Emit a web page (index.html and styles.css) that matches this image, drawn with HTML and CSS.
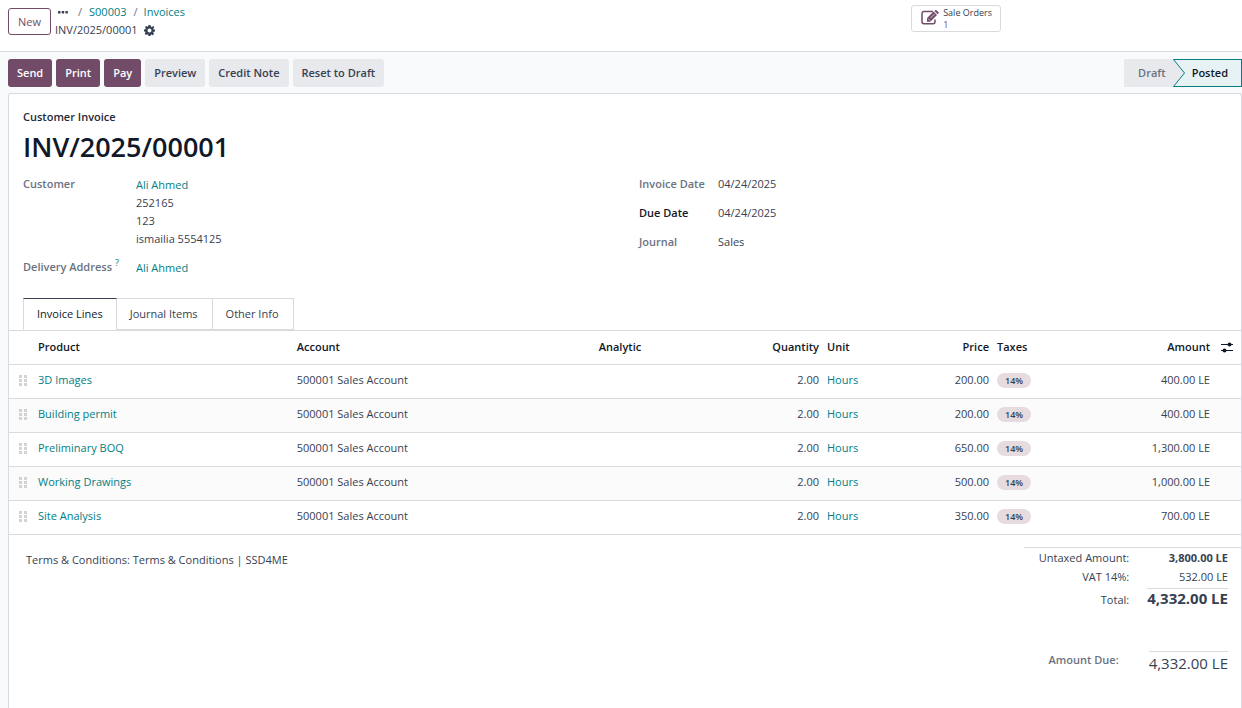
FILE: index.html
```html
<!DOCTYPE html>
<html lang="en">
<head>
<meta charset="utf-8">
<title>INV/2025/00001</title>
<link rel="stylesheet" href="styles.css">
</head>
<body>
<svg class="defs" aria-hidden="true">
  <symbol id="grip" viewBox="0 0 8 11"><path d="M0 0h3v3H0zM5 0h3v3H5zM0 4h3v3H0zM5 4h3v3H5zM0 8h3v3H0zM5 8h3v3H5z"/></symbol>
</svg>
<header class="topbar">
  <div class="topbar-left">
    <button class="btn btn-outline" type="button">New</button>
    <nav class="crumbs" aria-label="Breadcrumb">
      <div class="crumb-line">
        <button class="crumb-more" type="button" aria-label="More">
          <svg width="10" height="4" viewBox="0 0 10 4"><rect x="0" y="1" width="2.500" height="2.500" rx=".6"/><rect x="3.700" y="1" width="2.500" height="2.500" rx=".6"/><rect x="7.400" y="1" width="2.500" height="2.500" rx=".6"/></svg>
        </button>
        <span class="sep">/</span><a href="#">S00003</a><span class="sep">/</span><a href="#">Invoices</a>
      </div>
      <div class="crumb-current"><span>INV/2025/00001</span>
        <button class="crumb-more" type="button" aria-label="Actions">
          <svg width="11" height="11" viewBox="0 0 22 22"><path fill-rule="evenodd" d="M9 0h4l.7 3.200 1.900.8L18.400 2.200l2 2-.4 1.200-1.500 1.500.8 1.900L22 9v4l-2.700.7-.8 1.900 1.600 2.300-2.700 2.700-2.300-1.600-1.900.8L13 22H9l-.7-2.700-1.900-.8-2.300 1.600-2.700-2.700 1.600-2.300-.8-1.900L0 13V9l2.700-.7.8-1.900L1.900 4.100l2.200-2.200 2.300 1.600 1.900-.8zM11 7a4 4 0 1 0 0 8 4 4 0 0 0 0-8z"/></svg>
        </button>
      </div>
    </nav>
  </div>
  <button class="stat" type="button">
    <svg width="18" height="15" viewBox="0 0 18 15"><path class="stat-box" d="M12 1.500H3A2 2 0 0 0 1 3.500v8.300a2 2 0 0 0 2 2h9a2 2 0 0 0 2-2V9.500"/><path d="M6 11.800V8L12.500 1.500l3.500 3.500-6.700 6.800zM13.300 1l1-.8q.6-.4 1.200 0L17.500 2.200q.5.600 0 1.200l-.8.900z"/><path class="stat-nick" d="M7.200 8.700l1.900 1.900M9.500 8l4-4"/></svg>
    <span class="stat-text"><span>Sale Orders</span><span class="stat-value">1</span></span>
  </button>
</header>

<div class="actions">
  <div class="buttons">
    <button class="btn btn-primary" type="button">Send</button>
    <button class="btn btn-primary" type="button">Print</button>
    <button class="btn btn-primary" type="button">Pay</button>
    <button class="btn btn-light" type="button">Preview</button>
    <button class="btn btn-light" type="button">Credit Note</button>
    <button class="btn btn-light" type="button">Reset to Draft</button>
  </div>
  <div class="status">
    <button class="step" type="button">Draft</button>
    <button class="step step-current" type="button" aria-current="step">
      <svg class="arrow" width="13" height="28" viewBox="0 0 13 28"><path class="arrow-fill" d="M0 0L11.500 14 0 28z"/><path class="arrow-line" d="M.5.500L11.500 14 .5 27.500"/></svg>
      Posted</button>
  </div>
</div>

<main class="sheet">
  <div class="head">
    <div class="kind">Customer Invoice</div>
    <h1>INV/2025/00001</h1>
    <div class="groups">
      <dl class="group group-left">
        <dt>Customer</dt>
        <dd><a href="#">Ali Ahmed</a><br>252165<br>123<br>ismailia 5554125</dd>
        <dt>Delivery Address <sup>?</sup></dt>
        <dd><a href="#">Ali Ahmed</a></dd>
      </dl>
      <dl class="group group-right">
        <dt>Invoice Date</dt><dd>04/24/2025</dd>
        <dt class="strong">Due Date</dt><dd>04/24/2025</dd>
        <dt>Journal</dt><dd>Sales</dd>
      </dl>
    </div>
  </div>

  <div class="tabs" role="tablist">
    <button class="tab tab-active" type="button" role="tab" aria-selected="true">Invoice Lines</button>
    <button class="tab" type="button" role="tab" aria-selected="false">Journal Items</button>
    <button class="tab" type="button" role="tab" aria-selected="false">Other Info</button>
  </div>

  <table class="lines">
    <colgroup><col class="c-grip"><col class="c-product"><col class="c-account"><col class="c-analytic"><col class="c-qty"><col class="c-unit"><col class="c-price"><col class="c-taxes"><col class="c-amount"><col class="c-opt"></colgroup>
    <thead>
      <tr><th></th><th>Product</th><th>Account</th><th>Analytic</th><th class="num">Quantity</th><th>Unit</th><th class="num">Price</th><th>Taxes</th><th class="num">Amount</th>
        <th class="opt"><button class="opt-btn" type="button" aria-label="Columns"><svg width="12" height="11" viewBox="0 0 12 11"><path class="opt-line" d="M0 2.500h12M0 8.500h12"/><circle cx="8.500" cy="2.500" r="2"/><circle cx="3.500" cy="8.500" r="2"/></svg></button></th></tr>
    </thead>
    <tbody>
      <tr><td class="grip"><svg><use href="#grip"/></svg></td><td><a href="#">3D Images</a></td><td>500001 Sales Account</td><td></td><td class="num">2.00</td><td><a href="#">Hours</a></td><td class="num">200.00</td><td><span class="tag">14%</span></td><td class="num">400.00 LE</td><td></td></tr>
      <tr><td class="grip"><svg><use href="#grip"/></svg></td><td><a href="#">Building permit</a></td><td>500001 Sales Account</td><td></td><td class="num">2.00</td><td><a href="#">Hours</a></td><td class="num">200.00</td><td><span class="tag">14%</span></td><td class="num">400.00 LE</td><td></td></tr>
      <tr><td class="grip"><svg><use href="#grip"/></svg></td><td><a href="#">Preliminary BOQ</a></td><td>500001 Sales Account</td><td></td><td class="num">2.00</td><td><a href="#">Hours</a></td><td class="num">650.00</td><td><span class="tag">14%</span></td><td class="num">1,300.00 LE</td><td></td></tr>
      <tr><td class="grip"><svg><use href="#grip"/></svg></td><td><a href="#">Working Drawings</a></td><td>500001 Sales Account</td><td></td><td class="num">2.00</td><td><a href="#">Hours</a></td><td class="num">500.00</td><td><span class="tag">14%</span></td><td class="num">1,000.00 LE</td><td></td></tr>
      <tr><td class="grip"><svg><use href="#grip"/></svg></td><td><a href="#">Site Analysis</a></td><td>500001 Sales Account</td><td></td><td class="num">2.00</td><td><a href="#">Hours</a></td><td class="num">350.00</td><td><span class="tag">14%</span></td><td class="num">700.00 LE</td><td></td></tr>
    </tbody>
  </table>

  <div class="foot">
    <p class="terms">Terms &amp; Conditions: Terms &amp; Conditions | SSD4ME</p>
    <div class="totals">
      <dl class="sums">
        <dt>Untaxed Amount:</dt><dd class="bold">3,800.00 LE</dd>
        <dt>VAT 14%:</dt><dd>532.00 LE</dd>
        <dt class="total">Total:</dt><dd class="total-value">4,332.00 LE</dd>
      </dl>
      <dl class="due">
        <dt>Amount Due:</dt><dd>4,332.00 LE</dd>
      </dl>
    </div>
  </div>
</main>
</body>
</html>
```

FILE: styles.css
```css
* { box-sizing: border-box; }
body {
  margin: 0;
  min-height: 100vh;
  display: flex;
  flex-direction: column;
  background: #f9fafb;
  color: #374151;
  font: 11px/18px "Open Sans", "Noto Sans", sans-serif;
}
button { font: inherit; color: inherit; border: 0; background: none; padding: 0; cursor: pointer; }
a { color: #017e84; text-decoration: none; }
dl, dd, p, h1 { margin: 0; }
svg { display: block; fill: currentColor; }
.defs { position: absolute; width: 0; height: 0; }

.topbar {
  display: grid;
  grid-template-columns: 1fr auto 241px;
  align-items: start;
  padding: 4px 0 11px 8px;
  background: #fff;
  border-bottom: 1px solid #d8dadd;
}
.topbar-left { display: flex; gap: 4px; }
.btn { height: 28px; padding: 0 9px; border-radius: 3px; font-weight: 600; }
.btn-outline { height: 27px; margin-top: 4px; background: #fff; border: 1px solid #714b67; color: #714b67; font-weight: 500; }
.btn-primary { background: #714b67; color: #fff; }
.btn-light { background: #e7e9ed; }
.crumb-line { display: flex; align-items: center; padding-left: 3px; line-height: 16px; font-weight: 500; }
.crumb-more { color: #374151; }
.sep { padding: 0 7px 0 10px; color: #6b7280; font-weight: 400; }
.sep ~ .sep { padding: 0 6px 0 7px; }
.crumb-current { display: flex; align-items: center; gap: 6px; line-height: 20px; }
.stat { display: flex; align-items: center; gap: 4px; height: 27px; margin-top: 1px; padding: 0 8px 0 9px; background: #fff; border: 1px solid #d8dadd; border-radius: 3px; font-size: 9px; font-weight: 500; line-height: 12px; text-align: left; }
.stat svg { color: #714b67; margin-bottom: 3px; }
.stat-box { fill: none; stroke: currentColor; stroke-width: 1.500; }
.stat-nick { fill: none; stroke: #fff; stroke-width: 0.700; }
.stat-text { display: flex; flex-direction: column; }
.stat-value { color: #714b67; }

.actions { display: flex; justify-content: space-between; padding: 7px 0 6px 8px; }
.buttons { display: flex; gap: 4px; }
.status { display: flex; }
.step { height: 28px; padding: 0 7px 0 14px; background: #e7e9ed; color: #6b7280; font-weight: 600; }
.step-current { position: relative; padding: 0 13px 0 19px; background: #e6f2f3; color: #111827; border: 1px solid #017e84; border-left: 0; }
.arrow { position: absolute; left: 0; top: -1px; }
.arrow-fill { fill: #e7e9ed; }
.arrow-line { fill: none; stroke: #017e84; }

.sheet { flex: 1; margin-left: 8px; background: #fff; border: 1px solid #d8dadd; border-bottom: 0; border-radius: 3px 3px 0 0; }
.head { padding: 15px 14px 21px; }
.kind { line-height: 16px; font-weight: 600; color: #1f2937; }
h1 { margin: 4px 0 10px; font-size: 27px; line-height: 36px; font-weight: 600; color: #111827; }
.groups { display: grid; grid-template-columns: 1fr 1fr; gap: 28px; }
.group { display: grid; align-content: start; }
.group-left { grid-template-columns: 113px 1fr; row-gap: 10px; }
.group-left dd { padding-top: 1px; }
.group-right { grid-template-columns: 79px 1fr; row-gap: 11px; }
dt { color: #6b7280; font-weight: 600; }
.strong { color: #111827; }
sup { color: #017e84; font-size: 9px; line-height: 9px; font-weight: 400; }

.tabs { display: flex; padding-left: 14px; border-bottom: 1px solid #d8dadd; }
.tab { height: 32px; padding: 0 14px 0 13px; border: 1px solid #d8dadd; border-left: 0; }
.tab-active { padding-right: 13px; border-left: 1px solid #d8dadd; border-top-color: #374151; border-bottom-color: #fff; color: #111827; }

.lines { width: 100%; table-layout: fixed; border-collapse: collapse; }
.c-grip { width: 25px; }
.c-product { width: 21%; }
.c-account { width: 302px; }
.c-qty { width: 100px; }
.c-unit { width: 77px; }
.c-price { width: 93px; }
.c-taxes { width: 108px; }
.c-amount { width: 113px; }
.c-opt { width: 27px; }
th, td { height: 34px; padding: 0 4px 2px; border-bottom: 1px solid #d8dadd; text-align: left; white-space: nowrap; }
th { height: 33px; padding-bottom: 0; color: #111827; font-weight: 600; }
.num { text-align: right; }
tbody tr:nth-child(even) { background: #fbfbfb; }
.grip { padding-left: 10px; color: #d1d3d7; }
.grip svg { width: 8px; height: 11px; }
.tag { display: inline-block; padding: 0 8px; border-radius: 8px; background: #e6dcdf; font-size: 9px; line-height: 15px; font-weight: 600; }
.opt { padding-left: 7px; }
.opt-btn { display: block; }
.opt-line { stroke: currentColor; }

.foot { display: flex; justify-content: space-between; align-items: flex-start; padding: 12px 0 24px 17px; }
.terms { padding-top: 4px; }
.totals { width: 217px; border-top: 1px solid #d8dadd; }
.sums, .due { display: grid; grid-template-columns: 1fr auto; column-gap: 18px; padding-right: 13px; text-align: right; }
.sums dt { color: #374151; font-weight: 400; }
.sums dt, .sums dd { line-height: 19px; }
.bold { font-weight: 700; }
.sums .total { padding-top: 4px; }
.total-value { margin-top: 2px; border-top: 1px solid #d8dadd; font-size: 15px; font-weight: 700; }
.due { column-gap: 30px; margin-top: 42px; }
.due dd { border-top: 1px solid #d8dadd; padding-top: 1px; font-size: 15px; line-height: 20px; font-weight: 500; }
```
